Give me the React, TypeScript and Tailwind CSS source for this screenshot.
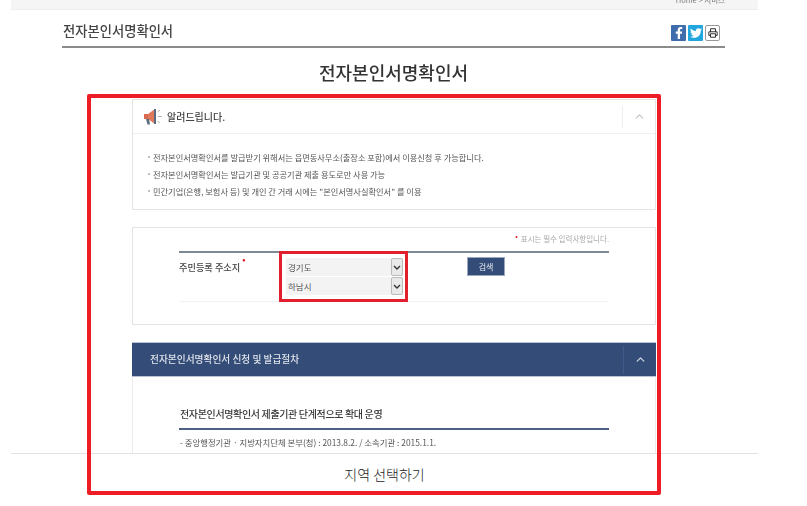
import { ChevronUp, Printer } from "lucide-react"
import { FaFacebookF, FaTwitter } from "react-icons/fa"

const notices = [
  "전자본인서명확인서를 발급받기 위해서는 읍면동사무소(출장소 포함)에서 이용신청 후 가능합니다.",
  "전자본인서명확인서는 발급기관 및 공공기관 제출 용도로만 사용 가능",
  "민간기업(은행, 보험사 등) 및 개인 간 거래 시에는 \"본인서명사실확인서\" 를 이용",
]

function Megaphone() {
  return (
    <svg width="18" height="16" viewBox="0 0 18 16">
      <path d="M0 5h4v5H0z" fill="#d9694f" />
      <path d="M4 5l7-5v15l-7-5z" fill="#e0785c" />
      <path d="M10 0h2v15h-2z" fill="#5d6b80" />
      <path d="M2 10h3l1 5.500H3.500z" fill="#5d6b80" />
      <path d="M13.500 3l2.500-2M14 7.500h4M13.500 12l2.500 2" stroke="#b5b5b5" strokeWidth="1" />
    </svg>
  )
}

function SelectBox({ value }: { value: string }) {
  return (
    <div className="flex h-[18px] items-center justify-between bg-[#f3f3f3] pl-[2px]">
      <span className="text-[8.500px] text-[#555]">{value}</span>
      <span className="flex h-[18px] w-[12px] items-center justify-center rounded-[2px] border border-[#bbb] bg-[#e9e9e9]">
        <svg width="8" height="5" viewBox="0 0 8 5">
          <path d="M1 1l3 3 3-3" fill="none" stroke="#333" strokeWidth="1.400" />
        </svg>
      </span>
    </div>
  )
}

export default function App() {
  return (
    <div className="relative h-[506px] w-[807px] overflow-hidden bg-white font-['Noto_Sans_CJK_KR',sans-serif]">
      <div className="ml-[11px] h-[453px] w-[747px] overflow-hidden blur-[0.45px]">
        <div className="flex h-[10px] items-end justify-end border-b border-[#eeeeee] bg-[#f6f5f5] pr-[33px]">
          <span className="-translate-y-[5px] text-[7.500px] leading-[8px] text-[#777]">Home &gt; 서비스</span>
        </div>

        <div className="ml-[51px] w-[663px]">
          <div className="flex h-[38px] items-end justify-between border-b-2 border-[#8b8b8b] pb-[5px]">
            <h2 className="pl-[1px] text-[13.300px] leading-[20px] font-medium text-[#444]">전자본인서명확인서</h2>
            <div className="flex gap-[2px] pr-[5px]">
              <span className="flex h-[16px] w-[15px] items-center justify-center rounded-[1px] bg-[#3f6cab] text-white">
                <FaFacebookF size={12} />
              </span>
              <span className="flex h-[16px] w-[15px] items-center justify-center rounded-[1px] bg-[#21a6de] text-white">
                <FaTwitter size={12} />
              </span>
              <span className="flex h-[16px] w-[15px] items-center justify-center rounded-[2px] border border-[#999] bg-white text-[#333]">
                <Printer size={10} strokeWidth={2.500} />
              </span>
            </div>
          </div>

          <h1 className="mt-[11px] text-center text-[18px] leading-[26px] font-medium text-[#333]">전자본인서명확인서</h1>

          <div className="mt-[14px] ml-[70px] w-[524px]">
            {/* notice card */}
            <div className="h-[111px] border border-[#e4e4e4] bg-white">
              <div className="flex h-[34px] items-center justify-between border-b border-[#f0f0f0]">
                <div className="flex items-center gap-[5px] pl-[11px]">
                  <Megaphone />
                  <span className="text-[10px] font-medium text-[#444]">알려드립니다.</span>
                </div>
                <div className="flex h-[22px] w-[33px] items-center justify-center border-l border-[#eeeeee] text-[#c4c4c4]">
                  <ChevronUp size={13} />
                </div>
              </div>
              <ul className="flex flex-col gap-[3px] pt-[16px] pl-[15px]">
                {notices.map((n) => (
                  <li key={n} className="flex items-center gap-[3px] text-[8.220px] leading-[14px] whitespace-nowrap text-[#555]">
                    <span className="h-[2px] w-[2px] rounded-full bg-[#aaa]" />
                    {n}
                  </li>
                ))}
              </ul>
            </div>

            {/* search form */}
            <div className="mt-[17px] h-[98px] border border-[#e4e4e4] px-[46px]">
              <div className="relative h-[23px]">
                <span className="absolute top-[5px] right-0 text-[7.500px] whitespace-nowrap text-[#aaa]">
                  <span className="relative -top-[3px] mr-[3px] text-[#e0202a]">•</span>표시는 필수 입력사항입니다.
                </span>
              </div>
              <div className="flex h-[51px] border-t-2 border-b border-t-[#7d8995] border-b-[#f2f2f2]">
                <div className="w-[107px] pt-[8px] text-[9.200px] font-medium text-[#444]">
                  주민등록 주소지<span className="relative -top-[8px] ml-[2px] text-[#e0202a]">•</span>
                </div>
                <div className="flex w-[117px] flex-col gap-[1px] pt-[5px]">
                  <SelectBox value="경기도" />
                  <SelectBox value="하남시" />
                </div>
                <button className="mt-[4px] ml-[64px] h-[19px] w-[38px] border border-[#9aa7bd] bg-[#344d78] text-[8px] text-[#e6e9ef]">
                  검색
                </button>
              </div>
            </div>

            {/* procedure section */}
            <div className="mt-[17px] h-[120px] border-x border-[#ececec]">
              <div className="-mx-[1px] flex h-[35px] items-center justify-between border-y border-[#b9c3d3] bg-[#344d78]">
                <span className="pl-[18px] text-[9.700px] font-medium text-[#dfe3ea]">전자본인서명확인서 신청 및 발급절차</span>
                <div className="flex h-[28px] w-[33px] items-center justify-center border-l border-[#41598a] text-[#c9d1de]">
                  <ChevronUp size={13} strokeWidth={2.500} />
                </div>
              </div>
              <div className="mx-[46px] mt-[28px] border-b-2 border-[#4d5f82] pb-[6px] pl-[1px] text-[10px] leading-[17px] font-medium tracking-[-0.35px] text-[#3a3a3a]">
                전자본인서명확인서 제출기관 단계적으로 확대 운영
              </div>
              <p className="mx-[46px] mt-[5px] pl-[1px] text-[8.400px] leading-[14px] whitespace-nowrap text-[#555]">
                - 중앙행정기관 · 지방자치단체 본부(청) : 2013.8.2. / 소속기관 : 2015.1.1.
              </p>
            </div>
          </div>
        </div>
      </div>

      <div className="ml-[11px] flex h-[42px] w-[747px] items-center justify-center border-t border-[#e3e3e3] pb-[1px] text-[14px] font-light text-[#222]">
        지역 선택하기
      </div>

      {/* red annotation frames */}
      <div className="absolute top-[94px] left-[87px] h-[401px] w-[574px] rounded-[2px] border-4 border-[#ee1c25]" />
      <div className="absolute top-[251px] left-[279px] h-[51px] w-[129px] border-[3px] border-[#e21f2d]" />
    </div>
  )
}
